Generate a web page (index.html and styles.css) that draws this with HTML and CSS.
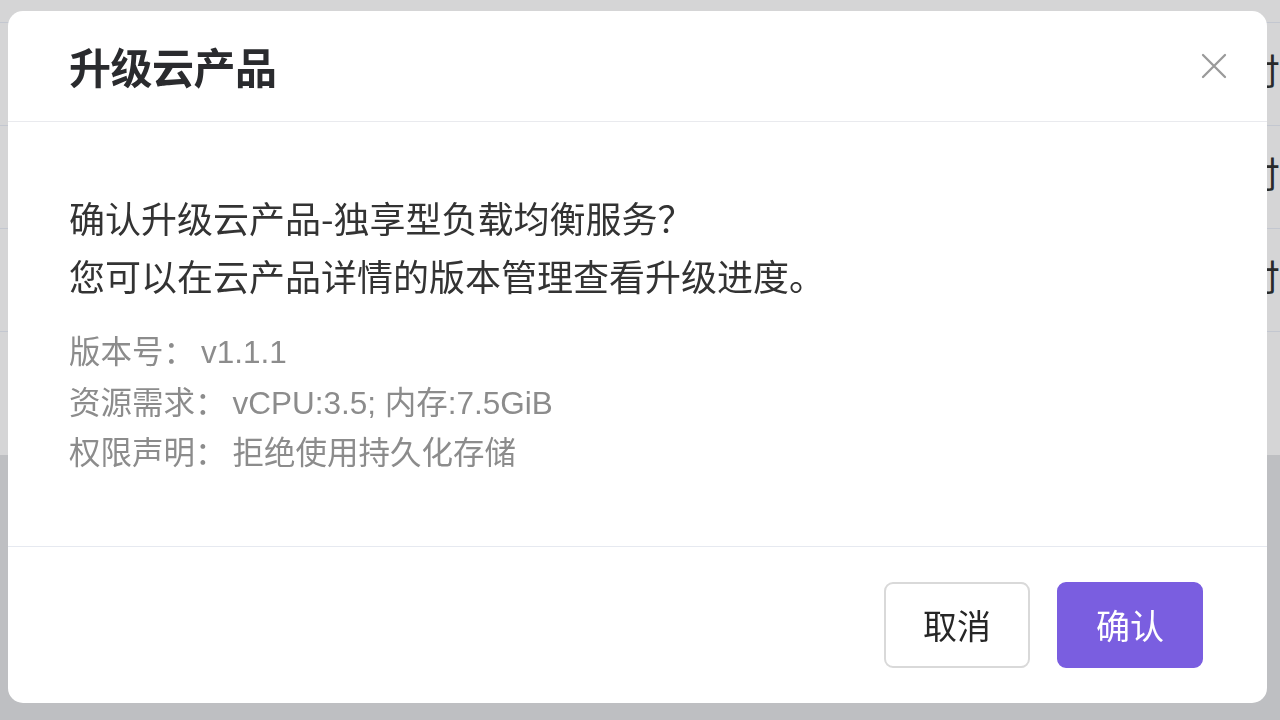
FILE: index.html
```html
<!DOCTYPE html>
<html lang="zh-CN">
<head>
<meta charset="utf-8">
<title>升级云产品</title>
<link rel="stylesheet" href="styles.css">
</head>
<body>
<div class="page">
  <div class="table">
    <div class="row row-head"></div>
    <div class="row"><span class="cell">付</span></div>
    <div class="row"><span class="cell">付</span></div>
    <div class="row"><span class="cell">付</span></div>
    <div class="row row-last"></div>
  </div>
  <div class="lower"></div>
</div>

<div class="modal">
  <div class="modal-header">
    <h1 class="modal-title">升级云产品</h1>
    <button class="modal-close" aria-label="关闭">
      <svg width="26" height="26" viewBox="0 0 26 26" fill="none" stroke="#9a9a9a" stroke-width="2.3" stroke-linecap="round">
        <path d="M2 2 L24 24 M24 2 L2 24"/>
      </svg>
    </button>
  </div>
  <div class="modal-body">
    <p class="main-text">确认升级云产品-独享型负载均衡服务？</p>
    <p class="main-text">您可以在云产品详情的版本管理查看升级进度。</p>
    <div class="details">
      <div class="detail-row"><span class="label">版本号：</span><span class="value">v1.1.1</span></div>
      <div class="detail-row"><span class="label">资源需求：</span><span class="value">vCPU:3.5; 内存:7.5GiB</span></div>
      <div class="detail-row"><span class="label">权限声明：</span><span class="value">拒绝使用持久化存储</span></div>
    </div>
  </div>
  <div class="modal-footer">
    <button class="btn btn-default">取消</button>
    <button class="btn btn-primary">确认</button>
  </div>
</div>
</body>
</html>
```

FILE: styles.css
```css
* {
  box-sizing: border-box;
}

html, body {
  margin: 0;
  padding: 0;
  width: 1280px;
  height: 720px;
  overflow: hidden;
}

body {
  font-family: "Liberation Sans", "Noto Sans CJK SC", sans-serif;
  background: #bebfc2;
}

.page {
  display: flex;
  flex-direction: column;
  height: 720px;
}

.table {
  height: 455px;
  background: #d5d5d6;
  display: flex;
  flex-direction: column;
}

.row {
  height: 103px;
  border-bottom: 1px solid #c3c7d0;
  display: flex;
  align-items: center;
  justify-content: flex-end;
  padding-right: 0;
  padding-bottom: 10px;
}

.row-head {
  height: 23px;
  padding: 0;
}

.row-last {
  flex: 1;
  border-bottom: none;
}

.cell {
  font-family: "Noto Sans CJK SC", sans-serif;
  font-size: 36px;
  color: #2a2a2a;
  line-height: 1;
}

.lower {
  flex: 1;
  background: #bebfc2;
}

.modal {
  position: fixed;
  left: 8px;
  top: 11px;
  width: 1259px;
  height: 692px;
  background: #ffffff;
  border-radius: 15px;
  display: flex;
  flex-direction: column;
  overflow: hidden;
}

.modal-header {
  height: 111px;
  border-bottom: 1px solid #e9eaee;
  display: flex;
  align-items: center;
  justify-content: space-between;
  padding: 0 40px 0 61px;
  flex-shrink: 0;
}

.modal-title {
  margin: 0;
  font-family: "Noto Sans CJK SC", sans-serif;
  font-size: 42px;
  font-weight: 700;
  color: #2a2b2e;
  line-height: 1;
  letter-spacing: -0.5px;
}

.modal-close {
  border: none;
  background: transparent;
  padding: 0;
  width: 26px;
  height: 26px;
  display: flex;
  align-items: center;
  justify-content: center;
  cursor: pointer;
}

.modal-body {
  flex: 1;
  padding: 66px 61px 0 61px;
  border-bottom: 1px solid #e6e9f0;
}

.main-text {
  margin: 0;
  font-family: "Noto Sans CJK SC", sans-serif;
  font-size: 36px;
  line-height: 58px;
  color: #333333;
}

.details {
  margin-top: 20px;
}

.detail-row {
  height: 50.5px;
  font-size: 31.5px;
  line-height: 50.5px;
  color: #8c8c8c;
  white-space: nowrap;
}

.label {
  font-family: "Noto Sans CJK SC", sans-serif;
  margin-right: 6px;
}

.value {
  font-family: "Liberation Sans", "Noto Sans CJK SC", sans-serif;
}

.modal-footer {
  height: 156px;
  flex-shrink: 0;
  display: flex;
  align-items: center;
  justify-content: flex-end;
  gap: 27px;
  padding-right: 64px;
}

.btn {
  width: 146px;
  height: 86px;
  border-radius: 9px;
  font-family: "Noto Sans CJK SC", sans-serif;
  font-size: 34px;
  line-height: 1;
  cursor: pointer;
  padding: 0;
}

.btn-default {
  background: #ffffff;
  border: 2px solid #d9d9d9;
  color: #262626;
}

.btn-primary {
  background: #7a5ee0;
  border: 2px solid #7a5ee0;
  color: #ffffff;
}
```
